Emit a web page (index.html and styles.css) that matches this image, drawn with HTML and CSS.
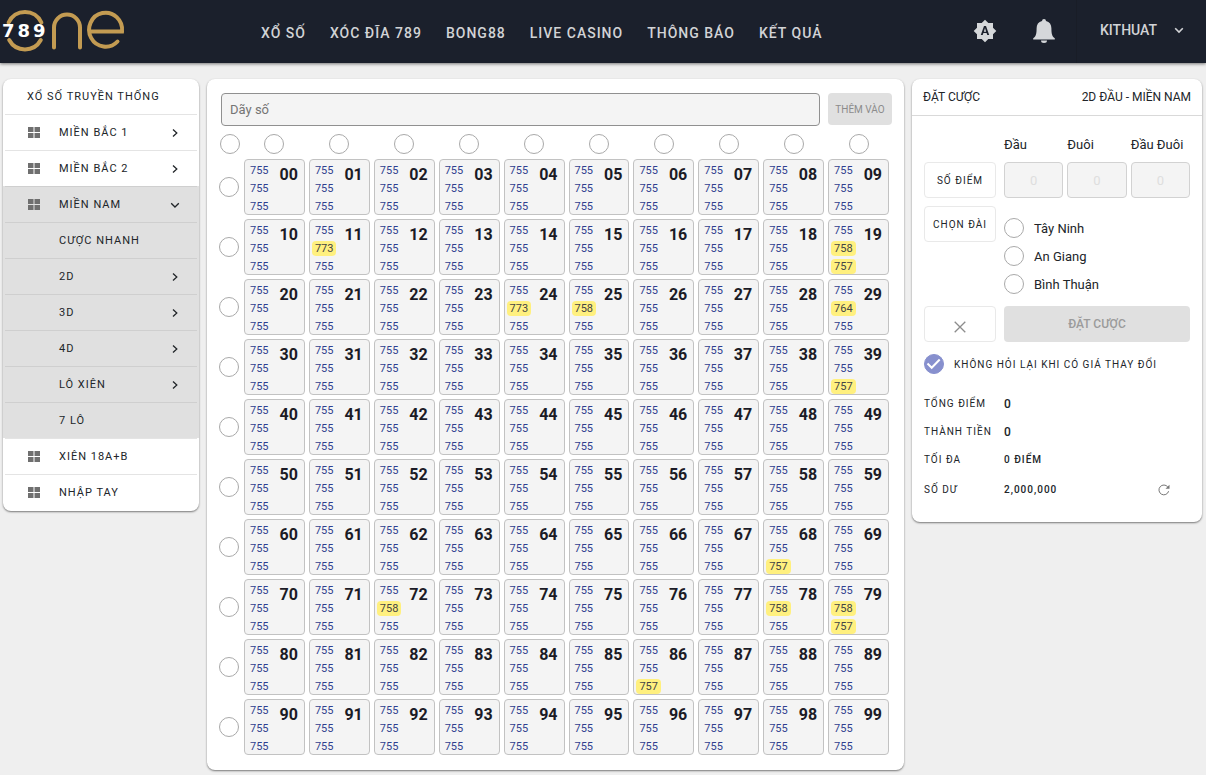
FILE: index.html
```html
<!DOCTYPE html>
<html lang="vi">
<head>
<meta charset="utf-8">
<meta name="viewport" content="width=device-width, initial-scale=1">
<title>789 One</title>
<link rel="stylesheet" href="styles.css">
</head>
<body>
<svg class="sprite" aria-hidden="true">
  <symbol id="i-tiles" viewBox="0 0 12 11"><path d="M0 0h5.5v5H0zM6.5 0H12v5H6.5zM0 6h5.5v5H0zM6.5 6H12v5H6.5z"/></symbol>
  <symbol id="i-right" viewBox="0 0 10 10"><path d="M3 1.5L6.8 5 3 8.5"/></symbol>
  <symbol id="i-down" viewBox="0 0 10 10"><path d="M1.2 3.2L5 7l3.8-3.8"/></symbol>
</svg>

<header class="topbar">
  <a class="logo" href="#" aria-label="789 One">
    <svg width="126" height="44" viewBox="0 0 126 44">
      <g class="logo-mark">
        <path d="M8.6 14.5A18 18 0 0 1 41.4 14.5M9.2 32A18 18 0 0 0 40.8 32"/>
        <path d="M54 39.500V19.500A13 13 0 0 1 80 19.500V39.500"/>
        <path d="M91 23.500H122A16.500 17 0 1 0 117.500 33.500"/>
      </g>
      <text class="logo-num" x="2" y="29">789</text>
    </svg>
  </a>
  <nav class="nav">
    <a href="#">XỔ SỐ</a>
    <a href="#">XÓC ĐĨA 789</a>
    <a href="#">BONG88</a>
    <a href="#">LIVE CASINO</a>
    <a href="#">THÔNG BÁO</a>
    <a href="#">KẾT QUẢ</a>
  </nav>
  <div class="tools">
    <button class="icon-btn" type="button" aria-label="Giao diện">
      <svg width="24" height="24" viewBox="0 0 24 24"><path fill-rule="evenodd" d="M10.850 12.650h2.300L12 9l-1.150 3.650zM20 8.690V4h-4.690L12 .690 8.690 4H4v4.690L.690 12 4 15.310V20h4.690L12 23.310 15.310 20H20v-4.690L23.310 12 20 8.690zM14.300 16l-.7-2H10.400l-.7 2H7.800L11 7h2l3.200 9h-1.900z"/></svg>
    </button>
    <button class="icon-btn" type="button" aria-label="Thông báo">
      <svg width="22" height="24" viewBox="0 0 22 24"><path d="M11 0a2 2 0 0 1 2 2c3.600.9 5.400 3.600 5.400 7.200 0 5.200.6 8.200 3.400 10v1.300H.2v-1.300c2.800-1.800 3.400-4.800 3.400-10C3.600 5.600 5.400 2.900 9 2a2 2 0 0 1 2-2zM8 21.500h6a3 2.500 0 0 1-6 0z"/></svg>
    </button>
  </div>
  <button class="user" type="button">KITHUAT <svg class="chev"><use href="#i-down"/></svg></button>
</header>

<main class="layout">
  <aside class="card menu">
    <h2 class="menu-title">XỔ SỐ TRUYỀN THỐNG</h2>
    <ul class="menu-list">
      <li><a href="#"><svg class="tiles"><use href="#i-tiles"/></svg><span>MIỀN BẮC 1</span><svg class="chev"><use href="#i-right"/></svg></a></li>
      <li><a href="#"><svg class="tiles"><use href="#i-tiles"/></svg><span>MIỀN BẮC 2</span><svg class="chev"><use href="#i-right"/></svg></a></li>
      <li class="open"><a href="#"><svg class="tiles"><use href="#i-tiles"/></svg><span>MIỀN NAM</span><svg class="chev"><use href="#i-down"/></svg></a></li>
      <li class="open"><a href="#"><span>CƯỢC NHANH</span></a></li>
      <li class="open"><a href="#"><span>2D</span><svg class="chev"><use href="#i-right"/></svg></a></li>
      <li class="open"><a href="#"><span>3D</span><svg class="chev"><use href="#i-right"/></svg></a></li>
      <li class="open"><a href="#"><span>4D</span><svg class="chev"><use href="#i-right"/></svg></a></li>
      <li class="open"><a href="#"><span>LÔ XIÊN</span><svg class="chev"><use href="#i-right"/></svg></a></li>
      <li class="open"><a href="#"><span>7 LÔ</span></a></li>
      <li><a href="#"><svg class="tiles"><use href="#i-tiles"/></svg><span>XIÊN 18A+B</span></a></li>
      <li><a href="#"><svg class="tiles"><use href="#i-tiles"/></svg><span>NHẬP TAY</span></a></li>
    </ul>
  </aside>

  <section class="card board">
    <form class="entry">
      <input class="entry-input" type="text" placeholder="Dãy số" aria-label="Dãy số">
      <button class="btn-grey entry-btn" type="button" disabled>THÊM VÀO</button>
    </form>
    <div class="grid" id="grid"></div>
  </section>

  <section class="card bet">
    <header class="bet-head"><h2>ĐẶT CƯỢC</h2><h2>2D ĐẦU - MIỀN NAM</h2></header>
    <form class="bet-form">
      <div class="triple triple-labels">
        <label for="p1">Đầu</label><label for="p2">Đuôi</label><label for="p3">Đầu Đuôi</label>
      </div>
      <button class="btn-line" type="button">SỐ ĐIỂM</button>
      <div class="triple">
        <input id="p1" type="text" placeholder="0" disabled>
        <input id="p2" type="text" placeholder="0" disabled>
        <input id="p3" type="text" placeholder="0" disabled>
      </div>
      <button class="btn-line" type="button">CHỌN ĐÀI</button>
      <div class="stations">
        <label><input class="round" type="checkbox"> Tây Ninh</label>
        <label><input class="round" type="checkbox"> An Giang</label>
        <label><input class="round" type="checkbox"> Bình Thuận</label>
      </div>
      <button class="btn-line btn-clear" type="button" aria-label="Xóa"><svg width="12" height="12" viewBox="0 0 12 12"><path d="M.7.7l10.600 10.600M11.300.7L.7 11.300"/></svg></button>
      <button class="btn-grey" type="submit" disabled>ĐẶT CƯỢC</button>
      <label class="confirm"><span class="tick"><input class="round" type="checkbox" checked><svg viewBox="0 0 20 20"><path d="M3.500 9.500l4.200 4.300 8-8.300"/></svg></span> KHÔNG HỎI LẠI KHI CÓ GIÁ THAY ĐỔI</label>
    </form>
    <dl class="totals">
      <dt>TỔNG ĐIỂM</dt><dd class="big">0</dd>
      <dt>THÀNH TIỀN</dt><dd class="big">0</dd>
      <dt>TỐI ĐA</dt><dd>0 ĐIỂM</dd>
      <dt>SỐ DƯ</dt><dd class="balance">2,000,000
        <button type="button" aria-label="Tải lại"><svg width="12" height="12" viewBox="0 0 12 12"><path d="M10.600 7.200A4.900 4.900 0 1 1 9.800 3"/><path class="head" d="M11.500.8v4H7.500z"/></svg></button></dd>
    </dl>
  </section>
</main>
<script src="app.js"></script>
</body>
</html>
```
FILE: styles.css
```css
* { box-sizing: border-box; }
body {
  margin: 0;
  background: #efefef;
  color: #212529;
  font-family: Roboto, "Liberation Sans", sans-serif;
  font-size: 13px;
}
a { color: inherit; text-decoration: none; }
button, input { font: inherit; color: inherit; }
button { border: 0; padding: 0; background: none; cursor: pointer; }
h2, ul, dl, dd { margin: 0; padding: 0; font-weight: 400; }
ul { list-style: none; }
.sprite { display: none; }

.topbar {
  display: flex;
  align-items: stretch;
  height: 63px;
  background: #1b202c;
  color: #d2d3d6;
  box-shadow: 0 1px 3px rgba(0, 0, 0, .5);
}
.logo { width: 261px; padding-top: 8px; }
.logo svg { display: block; }
.logo-mark { fill: none; stroke: #c39b52; stroke-width: 4; stroke-linecap: round; }
.logo-num { fill: #fff; font-family: "DejaVu Sans", sans-serif; font-size: 18px; font-weight: 700; letter-spacing: 3px; }
.nav {
  display: flex;
  flex: 1;
  align-items: center;
  gap: 24px;
  padding-top: 2px;
  font-size: 14px;
  font-weight: 500;
  letter-spacing: 1px;
  white-space: nowrap;
}
.tools { display: flex; align-items: center; gap: 36px; padding: 0 21px 2px 0; }
.icon-btn svg { display: block; fill: #d5d7da; }
.user {
  display: flex;
  align-items: center;
  justify-content: space-between;
  width: 130px;
  padding: 0 22px 3px 23px;
  border-left: 1px solid #191d27;
  font-size: 14px;
  font-weight: 500;
}
.chev { width: 10px; height: 10px; fill: none; stroke: currentColor; stroke-width: 1.300; }
.user .chev { stroke-width: 1.600; }

.layout {
  display: grid;
  grid-template-columns: 196px minmax(0, 1fr) 290px;
  align-items: start;
  gap: 8px;
  padding: 16px 4px 5px 3px;
}
.card {
  overflow: hidden;
  background: #fff;
  border-radius: 8px;
  box-shadow: 0 1px 2px rgba(0, 0, 0, .5);
}

.menu { padding-bottom: 1px; font-size: 11px; letter-spacing: 1px; }
.menu-title { height: 35px; padding-left: 24px; font-size: 11px; line-height: 35px; }
.menu-list li { padding: 0 2px; }
.menu-list a {
  display: grid;
  grid-template-columns: 31px 1fr 10px;
  align-items: center;
  height: 36px;
  padding: 0 17px 0 23px;
  border-top: 1px solid #e4e4e4;
}
.menu-list span { grid-column: 2; line-height: 16px; }
.menu-list .open { background: #e0e0e0; }
.menu-list .open a { border-color: #cfcfcf; }
.tiles { width: 12px; height: 11px; fill: #6f6f6f; }

.board { padding: 14px 12px 15px; }
.entry { display: grid; grid-template-columns: 1fr 64px; gap: 8px; padding-left: 2px; margin-bottom: 8px; }
.entry-input {
  width: 100%;
  height: 33px;
  padding: 0 8px;
  border: 1px solid #909090;
  border-radius: 4px;
  background: #f4f4f4;
}
.entry-input::placeholder { color: #757575; }
.btn-grey { border-radius: 4px; background: #e0e0e0; color: #9b9b9b; font-weight: 500; }
.entry-btn { height: 32px; font-size: 10px; color: #8c8c8c; font-weight: 400; white-space: nowrap; }

.grid {
  display: grid;
  grid-template-columns: 21px repeat(10, minmax(0, 1fr));
  gap: 4px;
  align-items: center;
  justify-items: center;
  padding-right: 3px;
}
.grid > .round { justify-self: start; }
.round {
  appearance: none;
  display: block;
  width: 20px;
  height: 20px;
  margin: 0;
  border: 1px solid #a9a9a9;
  border-radius: 50%;
  background: #fff;
}
.grid-head { height: 21px; }
.cell {
  display: flex;
  justify-content: space-between;
  align-items: flex-start;
  width: 100%;
  height: 56px;
  padding: 3px 6px 0 2px;
  border: 1px solid #c2c2c2;
  border-radius: 4px;
  background: #f4f4f4;
}
.odds { display: grid; gap: 3px; color: #303f8f; font-size: 11px; line-height: 15px; }
.odds span { padding: 0 3px; border-radius: 4px; }
.odds .hot { background: #fff07f; color: #444; }
.num { padding-top: 3px; font-size: 16px; font-weight: 700; line-height: 18px; color: #1b1b26; }

.bet-head {
  display: flex;
  justify-content: space-between;
  height: 37px;
  padding: 0 11px;
  border-bottom: 1px solid #d9d9d9;
  line-height: 36px;
}
.bet-head h2 { font-size: 12px; }
.bet-form {
  display: grid;
  grid-template-columns: 72px 1fr;
  gap: 8px;
  align-items: start;
  padding: 18px 12px 0;
}
.triple { display: grid; grid-template-columns: repeat(3, minmax(0, 1fr)); gap: 4px; }
.triple-labels { grid-column: 2; height: 20px; line-height: 22px; white-space: nowrap; }
.triple input {
  width: 100%;
  height: 36px;
  border: 1px solid #d2d2d2;
  border-radius: 4px;
  background: #f4f4f4;
  text-align: center;
}
.triple input::placeholder { color: #dedede; }
.btn-line {
  height: 36px;
  border: 1px solid #e9e9e9;
  border-radius: 4px;
  background: #fff;
  font-size: 10px;
  letter-spacing: 1px;
}
.btn-clear { display: grid; place-items: center; padding-top: 6px; }
.btn-clear svg { fill: none; stroke: #8c8c8c; stroke-width: 1.300; }
.bet-form .btn-grey { height: 36px; font-size: 12px; }
.stations { display: grid; gap: 8px; padding: 12px 0 4px; }
.stations label { display: flex; align-items: center; gap: 10px; }
.confirm { grid-column: 1 / -1; display: flex; align-items: center; gap: 10px; padding-top: 4px; font-size: 10px; letter-spacing: 1px; white-space: nowrap; }
.tick { display: grid; }
.tick > * { grid-area: 1 / 1; }
.tick svg { width: 20px; height: 20px; fill: none; stroke: #fff; stroke-width: 2; pointer-events: none; }
.round:checked { border-color: #8790ce; background: #8790ce; }

.totals {
  display: grid;
  grid-template-columns: 72px 1fr;
  column-gap: 8px;
  padding: 16px 12px 16px;
  font-size: 10px;
  line-height: 28px;
  letter-spacing: 1px;
  white-space: nowrap;
}
.totals dd { font-weight: 500; }
.totals .big { font-size: 12px; }
.totals dt:last-of-type, .totals .balance { line-height: 32px; }
.balance { display: flex; align-items: center; justify-content: space-between; padding-right: 20px; }
.balance svg { display: block; fill: none; stroke: #777; stroke-width: 1; }
.balance .head { fill: #777; stroke: none; }
```
FILE: app.js
```js
const defaultOdds = 755;

// Prices that differ from the default, by number: [row 1, row 2, row 3].
const changed = {
  "11": [0, 773, 0],
  "19": [0, 758, 757],
  "24": [0, 773, 0],
  "25": [0, 758, 0],
  "29": [0, 764, 0],
  "39": [0, 0, 757],
  "68": [0, 0, 757],
  "72": [0, 758, 0],
  "78": [0, 758, 0],
  "79": [0, 758, 757],
  "86": [0, 0, 757]
};

const grid = document.getElementById("grid");

function addPicker(label, head) {
  const box = document.createElement("input");
  box.type = "checkbox";
  box.className = "round";
  box.setAttribute("aria-label", label);
  if (head) {
    const wrap = document.createElement("div");
    wrap.className = "grid-head";
    wrap.append(box);
    grid.append(wrap);
  } else {
    grid.append(box);
  }
}

function addCell(num) {
  const prices = changed[num] || [0, 0, 0];
  const cell = document.createElement("button");
  cell.type = "button";
  cell.className = "cell";
  cell.innerHTML =
    '<span class="odds">' +
    prices.map(p => `<span${p ? ' class="hot"' : ""}>${p || defaultOdds}</span>`).join("") +
    `</span><span class="num">${num}</span>`;
  grid.append(cell);
}

addPicker("Chọn tất cả", true);
for (let c = 0; c < 10; c++) addPicker("Cột " + c, true);
for (let r = 0; r < 10; r++) {
  addPicker("Hàng " + r, false);
  for (let c = 0; c < 10; c++) addCell(`${r}${c}`);
}
```
